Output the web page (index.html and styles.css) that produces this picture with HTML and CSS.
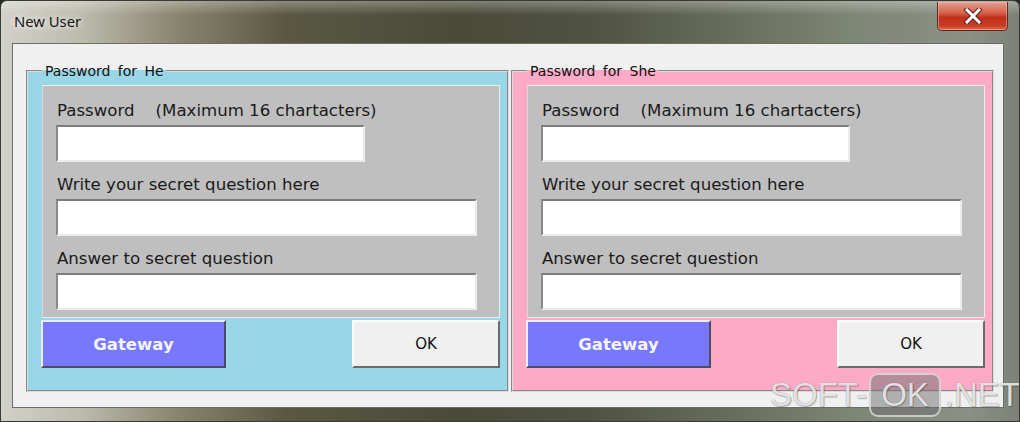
FILE: index.html
```html
<!DOCTYPE html>
<html>
<head>
<meta charset="utf-8">
<link rel="stylesheet" href="styles.css">
</head>
<body>
<div class="window">
  <div class="titlebar">
    <span class="title">New User</span>
    <div class="close">
      <svg width="22" height="16" viewBox="0 0 22 16"><path d="M5 2 L17 14 M17 2 L5 14" stroke="#5a2018" stroke-width="5" stroke-linecap="square"/><path d="M5 2 L17 14 M17 2 L5 14" stroke="#ffffff" stroke-width="3" stroke-linecap="square"/></svg>
    </div>
  </div>
  <div class="client">
    <div class="frames">
      <fieldset class="group he">
        <legend>Password for He</legend>
        <div class="panel">
          <div class="field">
            <div class="label">Password&nbsp;&nbsp;&nbsp; (Maximum 16 chartacters)</div>
            <div class="input short"></div>
          </div>
          <div class="field">
            <div class="label">Write your secret question here</div>
            <div class="input"></div>
          </div>
          <div class="field">
            <div class="label">Answer to secret question</div>
            <div class="input"></div>
          </div>
        </div>
        <div class="buttons">
          <div class="btn gateway">Gateway</div>
          <div class="btn ok">OK</div>
        </div>
      </fieldset>
      <fieldset class="group she">
        <legend>Password for She</legend>
        <div class="panel">
          <div class="field">
            <div class="label">Password&nbsp;&nbsp;&nbsp; (Maximum 16 chartacters)</div>
            <div class="input short"></div>
          </div>
          <div class="field">
            <div class="label">Write your secret question here</div>
            <div class="input"></div>
          </div>
          <div class="field">
            <div class="label">Answer to secret question</div>
            <div class="input"></div>
          </div>
        </div>
        <div class="buttons">
          <div class="btn gateway">Gateway</div>
          <div class="btn ok">OK</div>
        </div>
      </fieldset>
    </div>
  </div>
  <div class="watermark"><span class="wm-text">SOFT-</span><span class="wm-box">OK</span><span class="wm-text">.NET</span></div>
</div>
</body>
</html>
```
FILE: styles.css
```css
html, body {
  margin: 0;
  padding: 0;
  background: #2a2a26;
}
.window {
  position: relative;
  width: 1020px;
  height: 422px;
  box-sizing: border-box;
  display: flex;
  flex-direction: column;
  border-radius: 7px 7px 0 0;
  border: 1px solid #3a3a34;
  background:
    linear-gradient(180deg, rgba(255,255,255,0.3) 0px, rgba(255,255,255,0) 14px),
    linear-gradient(90deg, #d2d1ca 0%, #bcbaac 8%, #8a8670 17%, #5a5842 28%, #4a4a38 45%, #505242 58%, #646a58 70%, #7e8676 84%, #8a9086 95%, #7c8278 100%);
  overflow: hidden;
}
.titlebar {
  height: 42px;
  display: flex;
  align-items: flex-start;
  justify-content: space-between;
  flex: none;
}
.title {
  font-family: "Noto Sans", "DejaVu Sans", sans-serif;
  font-size: 14.8px;
  line-height: 20px;
  color: #141414;
  margin: 10px 0 0 13px;
  text-shadow: 0 0 6px rgba(255,255,255,0.9), 0 0 10px rgba(255,255,255,0.6);
}
.close {
  width: 71px;
  height: 29px;
  margin: 1px 11px 0 0;
  box-sizing: border-box;
  border: 1px solid #5c2a22;
  border-top: none;
  border-radius: 0 0 5px 5px;
  background: linear-gradient(180deg, #e6a090 0%, #d46048 40%, #c0301c 55%, #c83c24 85%, #e07050 100%);
  box-shadow: inset 0 0 0 1px rgba(255,200,190,0.45);
  display: flex;
  align-items: center;
  justify-content: center;
}
.client {
  flex: 1;
  margin: 0 15px 13px 11px;
  background: #f0f0f0;
  border: 1px solid #6c6c68;
  box-sizing: border-box;
}
.frames {
  display: flex;
  gap: 2px;
  padding: 19px 0 0 13px;
}
.group {
  width: 483px;
  box-sizing: border-box;
  margin: 0;
  padding: 6px 0 22px 14px;
  border: 2px groove #dcdcdc;
  min-width: 0;
}
.group.he { background: #98d6e8; }
.group.she { background: #fdaac7; }
.group legend {
  font-family: "DejaVu Sans", sans-serif;
  font-size: 14px;
  line-height: 16px;
  word-spacing: 3px;
  color: #101010;
  padding: 0 2px 0 3px;
}
.panel {
  width: 458px;
  box-sizing: border-box;
  background: #bfbfbf;
  border: 1px solid #ececec;
  border-left-color: #d8d8d8;
  padding: 14px 0 7px 13px;
  display: flex;
  flex-direction: column;
  gap: 12px;
}
.field {
  display: flex;
  flex-direction: column;
}
.label {
  font-family: "DejaVu Sans", sans-serif;
  font-size: 16.6px;
  line-height: 22px;
  color: #1a1a1a;
  margin: 0 0 3px 1px;
  white-space: nowrap;
}
.input {
  width: 421px;
  height: 37px;
  box-sizing: border-box;
  background: #ffffff;
  border: 2px solid;
  border-color: #7c7c7c #ececec #ececec #8a8a8a;
}
.input.short { width: 309px; }
.buttons {
  display: flex;
  justify-content: space-between;
  width: 459px;
  margin: 2px 0 0 -1px;
}
.btn {
  height: 48px;
  box-sizing: border-box;
  display: flex;
  align-items: center;
  justify-content: center;
  font-family: "DejaVu Sans", sans-serif;
  font-size: 16.5px;
  border: 2px solid;
}
.gateway {
  width: 185px;
  background: #7878fc;
  color: #f4f4ff;
  font-weight: bold;
  border-color: #ececff #4c4c60 #4c4c60 #ececff;
}
.ok {
  width: 148px;
  background: #f0f0f0;
  color: #111111;
  font-size: 15px;
  border-color: #ffffff #6a6a6a #6a6a6a #ffffff;
}
.watermark {
  position: absolute;
  left: 769px;
  top: 372px;
  display: flex;
  align-items: center;
  font-family: "Liberation Sans", sans-serif;
  font-size: 33px;
  line-height: 44px;
  color: rgba(242,242,242,0.9);
  text-shadow: 0 0 1px rgba(60,60,60,0.6), 1px 1px 1px rgba(0,0,0,0.25);
}
.wm-box {
  margin: 0 4px 0 2px;
  padding: 0 10px;
  height: 44px;
  border-radius: 9px;
  background: rgba(110,110,110,0.5);
  border: 2px solid rgba(230,230,230,0.75);
  box-sizing: border-box;
  display: flex;
  align-items: center;
}
```
